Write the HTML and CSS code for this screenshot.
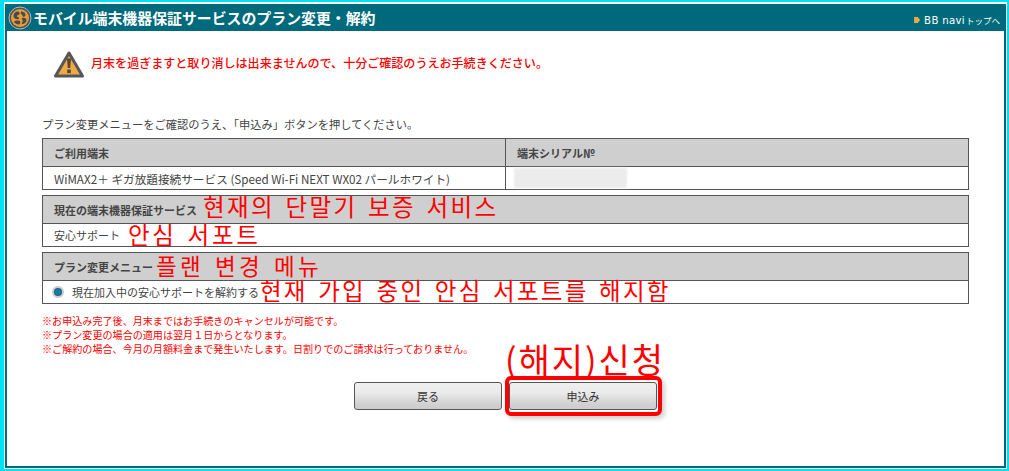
FILE: index.html
```html
<!DOCTYPE html>
<html lang="ja">
<head>
<meta charset="utf-8">
<title>モバイル端末機器保証サービスのプラン変更・解約</title>
<link rel="stylesheet" href="styles.css">
</head>
<body>
<div class="frame">
  <div class="panel">
    <header class="head">
      <div class="title">
        <svg class="logo" width="24" height="24" viewBox="0 0 24 24" aria-hidden="true">
          <circle cx="12" cy="12" r="11" fill="#4f5257" stroke="#aeb9c0" stroke-width="1"/>
          <circle cx="12" cy="12" r="9" fill="#e39c3a"/>
          <path d="M5.5 10c0-3 2-4.500 4-4.500 1.500 0 2.500 1 2 2.500-.4 1.200-2 .8-2.500 2-.3 1 1 1.200 2 1.500v1.500c-2.500.5-5.500-.2-5.500-3zM13 5.500c2 0 4.500 1 4.500 3.500 0 1.500-1.500 2-2.500 1.500-.8-.4-.3-1.500-1-2-.8-.5-1.500-.8-1.200-1.800.1-.5.200-1.200.2-1.200zM14 12c2-.5 4.500 0 4.500 2 0 2.500-2.500 4-4.500 4-.8-1.200.5-2 1-3-.5-1-1.500-1.500-1-3zM6 15.500c1.500-1.200 5-1.500 6-.5.5 1 .2 3.500-1 3.500-2 .2-4.500-1.300-5-3z" fill="#4a4a4a"/>
        </svg>
        <h1 class="title-text">モバイル端末機器保証サービスのプラン変更・解約</h1>
      </div>
      <a class="top-link" href="#"><span class="arrow"></span><span class="bb">BB navi</span><span class="top-ja">トップへ</span></a>
    </header>
    <main class="body">
      <div class="alert">
        <svg class="warn" width="32" height="30" viewBox="0 0 32 30" aria-hidden="true">
          <path d="M16 3 L29.500 26 H2.500 Z" fill="#eea945" stroke="#55565a" stroke-width="3" stroke-linejoin="round"/>
          <path d="M14 8.500h4l-.8 9.500h-2.400z" fill="#55463a"/>
          <rect x="14.200" y="19.500" width="3.600" height="3.600" fill="#55463a"/>
        </svg>
        <p class="alert-text">月末を過ぎますと取り消しは出来ませんので、十分ご確認のうえお手続きください。</p>
      </div>
      <p class="lead">プラン変更メニューをご確認のうえ、「申込み」ボタンを押してください。</p>

      <table class="tbl">
        <tr class="row-h"><th class="col-a">ご利用端末</th><th>端末シリアル№</th></tr>
        <tr class="row-d"><td class="col-a td-device">WiMAX2＋ ギガ放題接続サービス (Speed Wi-Fi NEXT WX02 パールホワイト)</td><td><span class="blur"></span></td></tr>
      </table>

      <table class="tbl">
        <tr class="row-h"><th>現在の端末機器保証サービス<span class="ko ko-a">현재의 단말기 보증 서비스</span></th></tr>
        <tr class="row-d"><td>安心サポート<span class="ko ko-b">안심 서포트</span></td></tr>
      </table>

      <table class="tbl">
        <tr class="row-h"><th>プラン変更メニュー<span class="ko ko-c">플랜 변경 메뉴</span></th></tr>
        <tr class="row-d"><td class="radio-cell"><label class="radio-label"><span class="radio"></span>現在加入中の安心サポートを解約する</label><span class="ko ko-d">현재 가입 중인 안심 서포트를 해지함</span></td></tr>
      </table>

      <ul class="notes">
        <li>※お申込み完了後、月末まではお手続きのキャンセルが可能です。</li>
        <li>※プラン変更の場合の適用は翌月１日からとなります。</li>
        <li>※ご解約の場合、今月の月額料金まで発生いたします。日割りでのご請求は行っておりません。</li>
      </ul>

      <div class="actions">
        <button class="btn" type="button">戻る</button>
        <div class="apply-wrap">
          <span class="ko ko-e">(해지)신청</span>
          <button class="btn" type="button">申込み</button>
          <span class="red-ring"></span>
        </div>
      </div>
    </main>
  </div>
</div>
</body>
</html>
```

FILE: styles.css
```css
* { box-sizing: border-box; }
html, body { margin: 0; padding: 0; background: #fff; }
body {
  width: 1009px;
  height: 471px;
  overflow: hidden;
  font-family: "Noto Sans CJK JP", "Liberation Sans", sans-serif;
  color: #333;
}
.frame {
  width: 1009px;
  height: 471px;
  border-style: solid;
  border-color: #00e1f2;
  border-width: 2px 2px 2px 4px;
  padding: 2px 1px 1px 1px;
  background: #fff;
}
.panel {
  height: 100%;
  border: 2px solid #006a7d;
  border-top: 0;
  display: flex;
  flex-direction: column;
}
.head {
  height: 27px;
  margin: 0 -2px;
  background: #006a7d;
  display: flex;
  align-items: center;
  justify-content: space-between;
  padding: 0 6px 0 3px;
  flex: none;
}
.title { display: flex; align-items: center; gap: 1px; }
.logo { display: block; }
.title-text {
  margin: 0;
  font-size: 14.9px;
  font-weight: 700;
  color: #fff;
  line-height: 27px;
  white-space: nowrap;
}
.top-link {
  display: flex;
  align-items: center;
  color: #fff;
  text-decoration: none;
  margin-top: 5px;
}
.arrow {
  width: 6px;
  height: 6px;
  background: #eea945;
  margin-right: 4px;
  clip-path: polygon(0 0, 60% 0, 100% 50%, 60% 100%, 0 100%);
}
.bb { font-family: "DejaVu Sans", sans-serif; font-size: 10.2px; letter-spacing: .3px; margin-right: 1px; }
.top-ja { font-size: 8.5px; }
.body {
  flex: 1;
  padding: 0 35px;
  position: relative;
  min-height: 0;
}
.alert {
  display: flex;
  align-items: flex-start;
  padding: 19px 0 0 11px;
  height: 53px;
  gap: 4px;
}
.warn { display: block; flex: none; }
.alert-text {
  margin: 4px 0 0 2px;
  color: #f00;
  font-size: 12.05px;
  line-height: 18px;
  font-weight: 500;
  white-space: nowrap;
}
.lead {
  margin: 32px 0 0;
  height: 22px;
  font-size: 11.25px;
  line-height: 16px;
  color: #444;
  white-space: nowrap;
}
.tbl {
  width: 927px;
  border-collapse: collapse;
  table-layout: fixed;
  margin-bottom: 5px;
  font-size: 11px;
}
.tbl th, .tbl td {
  border: 1px solid #555;
  padding: 0 0 0 11px;
  text-align: left;
  white-space: nowrap;
  overflow: visible;
}
.tbl th { background: #cfcfcf; color: #444; font-weight: 700; font-size: 11px; }
.col-a { width: 463px; }
.row-h { height: 28px; }
.row-d { height: 23px; }
.row-h th, .row-d td { position: relative; }
.tbl td { color: #444; position: relative; }
.tbl .td-device { font-size: 11.65px; }
.blur {
  display: block;
  width: 113px;
  height: 20px;
  margin-left: -3px;
  background: #ececec;
  filter: blur(1px);
}
.tbl .radio-cell { padding-left: 9px; }
.radio-label { display: inline-flex; align-items: center; gap: 8px; }
.radio {
  width: 12px;
  height: 12px;
  border-radius: 50%;
  border: 2px solid #c2cdd6;
  background: radial-gradient(circle, #0a7fb0 0 2.5px, #3a5a6c 3.5px);
}
.ko {
  position: absolute;
  font-family: "Noto Sans CJK KR", sans-serif;
  color: #f00;
  font-weight: 400;
  white-space: nowrap;
  line-height: 1;
}
.ko-a { left: 160px; top: -1px; font-size: 23.5px; letter-spacing: 2.35px; word-spacing: 3px; }
.ko-b { left: 85px; top: -1px; font-size: 23.5px; letter-spacing: 2.7px; word-spacing: 3px; }
.ko-c { left: 113px; top: 1px; font-size: 22.5px; letter-spacing: 3.2px; word-spacing: 3px; }
.ko-d { left: 217px; top: -2px; font-size: 23.5px; letter-spacing: 2.25px; word-spacing: 3px; }
.ko-e { left: -4px; top: -40px; font-size: 34px; letter-spacing: 2px; }
.notes {
  list-style: none;
  margin: 10px 0 0 0;
  padding: 0;
  font-size: 10.08px;
  line-height: 14px;
  color: #f00;
  white-space: nowrap;
}
.actions {
  display: flex;
  justify-content: center;
  gap: 7px;
  margin-top: 26px;
  padding-left: 0;
}
.btn {
  width: 148px;
  height: 28px;
  border: 1px solid #555;
  border-radius: 3px;
  background: linear-gradient(#efefef 0, #ebebeb 35%, #cfcfcf 85%, #cdcdcd 100%);
  font-family: inherit;
  font-size: 11px;
  color: #333;
  padding: 0;
  display: block;
}
.apply-wrap { position: relative; }
.red-ring {
  position: absolute;
  left: -4px;
  top: -6px;
  right: -5px;
  bottom: -6px;
  border: 4px solid #f00;
  border-radius: 6px;
  box-shadow: 3px 3px 4px rgba(0,0,0,.18);
  pointer-events: none;
}
```
